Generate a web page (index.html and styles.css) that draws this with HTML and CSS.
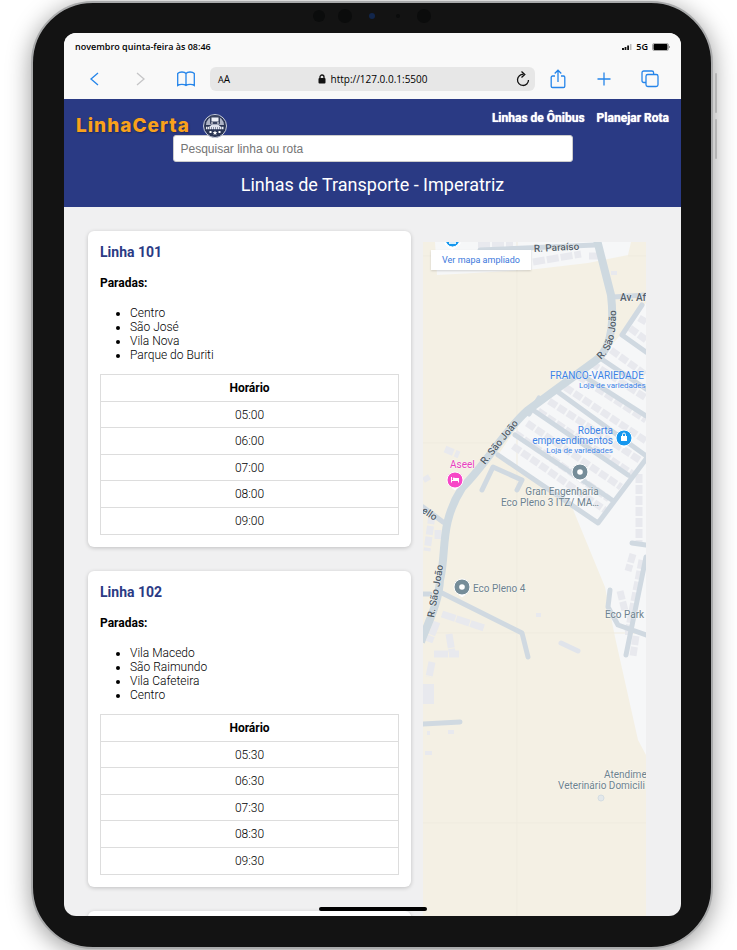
FILE: index.html
```html
<!DOCTYPE html>
<html lang="pt-BR">
<head>
<meta charset="utf-8">
<meta name="viewport" content="width=device-width, initial-scale=1">
<title>LinhaCerta</title>
<link rel="stylesheet" href="styles.css">
</head>
<body>
<div class="device">
  <div class="cameras" aria-hidden="true"><i class="cam"></i><i class="cam big"></i><i class="cam blue"></i><i class="cam tiny"></i><i class="cam big"></i></div>
  <span class="side-key key-up"></span>
  <span class="side-key key-down"></span>
  <div class="screen">
    <div class="status">
      <span>novembro quinta-feira às 08:46</span>
      <span class="status-right">
        <svg width="10" height="8" viewBox="0 0 10 8"><path d="M0 5h2v2H0zM2.600 4h1.800v3H2.600zM5.200 2.500H7V7H5.200z" fill="#111"/><path d="M7.900 1h1.600v6H7.900z" fill="#bbb"/></svg>
        <span>5G</span>
        <svg width="18" height="8" viewBox="0 0 18 8"><rect x=".5" y=".5" width="16" height="7" rx="1.500" fill="#fff" stroke="#aaa"/><rect x="1.500" y="1" width="14" height="6" rx="1" fill="#000"/><path d="M17.300 3v2" stroke="#888"/></svg>
      </span>
    </div>
    <div class="toolbar">
      <div class="tools-left">
        <button type="button" aria-label="Voltar"><svg width="18" height="18" viewBox="0 0 18 18"><path d="M13 3 6 9l7 6"/></svg></button>
        <button type="button" class="off" aria-label="Avançar"><svg width="18" height="18" viewBox="0 0 18 18"><path d="m6 3 7 6-7 6"/></svg></button>
        <button type="button" aria-label="Favoritos"><svg width="18" height="18" viewBox="0 0 18 18"><path d="M9 3.500C7.500 1.500 2.500 1.500.7 3.500v12c2-1.600 6.500-1.600 8.300 0 1.800-1.600 6.300-1.600 8.300 0v-12C15.500 1.500 10.500 1.500 9 3.500zv12"/></svg></button>
      </div>
      <div class="address">
        <span class="aa"><small>A</small>A</span>
        <span class="url"><svg width="8" height="10" viewBox="0 0 8 10"><path d="M2 4.500V3a2 2 0 0 1 4 0v1.500" fill="none" stroke="#111" stroke-width="1.300"/><rect x=".5" y="4" width="7" height="5.500" rx="1" fill="#111"/></svg>http://127.0.0.1:5500</span>
        <button type="button" class="reload" aria-label="Recarregar"><svg width="16" height="18" viewBox="0 0 16 18"><path d="M8.500 4.500A5.500 5.500 0 1 0 13.500 10M6.500 1.500l3.300 3-3.300 3"/></svg></button>
      </div>
      <div class="tools-right">
        <button type="button" aria-label="Compartilhar"><svg width="18" height="20" viewBox="0 0 18 20"><path d="M6 7H3.500A1.300 1.300 0 0 0 2.200 8.300v8.900a1.300 1.300 0 0 0 1.300 1.300h11a1.300 1.300 0 0 0 1.300-1.300V8.300A1.300 1.300 0 0 0 14.500 7H12M9 13V1.500M5.700 4.500 9 1.200l3.300 3.300"/></svg></button>
        <button type="button" aria-label="Nova aba"><svg width="18" height="18" viewBox="0 0 18 18"><path d="M9 2.500v13M2.500 9h13"/></svg></button>
        <button type="button" aria-label="Abas"><svg width="18" height="18" viewBox="0 0 18 18"><rect x="5" y="4.500" width="12" height="12" rx="1.800"/><path d="M5 12.500H2.800A1.800 1.800 0 0 1 1 10.700V2.800A1.800 1.800 0 0 1 2.800 1h8a1.800 1.800 0 0 1 1.800 1.800v1.700"/></svg></button>
      </div>
    </div>

    <header class="site-header">
      <div class="top-row">
        <a class="brand" href="#">
          <span class="brand-name">LinhaCerta</span>
          <svg width="24" height="24" viewBox="0 0 24 24"><circle cx="12" cy="12" r="11.500" fill="#2b3655" stroke="#c9cede"/><path d="M3 11a9 9 0 0 1 18 0z" fill="#aeb4c6"/><rect x="7" y="1.500" width="10" height="9" rx="1.500" fill="#39435f"/><path d="M8.500 3.500h7v4h-7z" fill="#eef0f6"/><path d="M8 9h2M14 9h2" stroke="#fff"/><path d="M9 10.500 6 13h12l-3-2.500z" fill="#dfe2ec"/><path d="M3 14h18" stroke="#e8ebf4" stroke-width="2.400" stroke-dasharray="1.500 .5"/><path d="m12 16.500.7 1.500 1.600.2-1.200 1.100.3 1.600-1.400-.8-1.400.8.300-1.600-1.200-1.100 1.600-.2zM6.500 17h2v2h-2zM15.500 17h2v2h-2z" fill="#fff"/></svg>
        </a>
        <nav class="nav"><a href="#">Linhas de Ônibus</a><a href="#">Planejar Rota</a></nav>
      </div>
      <input class="search" type="search" placeholder="Pesquisar linha ou rota" aria-label="Pesquisar linha ou rota">
      <h1>Linhas de Transporte - Imperatriz</h1>
    </header>

    <main class="content">
      <section class="lines">
        <article class="card">
          <h2>Linha 101</h2>
          <h3>Paradas:</h3>
          <ul><li>Centro</li><li>São José</li><li>Vila Nova</li><li>Parque do Buriti</li></ul>
          <table>
            <thead><tr><th scope="col">Horário</th></tr></thead>
            <tbody><tr><td>05:00</td></tr><tr><td>06:00</td></tr><tr><td>07:00</td></tr><tr><td>08:00</td></tr><tr><td>09:00</td></tr></tbody>
          </table>
        </article>
        <article class="card">
          <h2>Linha 102</h2>
          <h3>Paradas:</h3>
          <ul><li>Vila Macedo</li><li>São Raimundo</li><li>Vila Cafeteira</li><li>Centro</li></ul>
          <table>
            <thead><tr><th scope="col">Horário</th></tr></thead>
            <tbody><tr><td>05:30</td></tr><tr><td>06:30</td></tr><tr><td>07:30</td></tr><tr><td>08:30</td></tr><tr><td>09:30</td></tr></tbody>
          </table>
        </article>
        <article class="card"></article>
      </section>
      <aside class="map-column">
        <div class="map">
          <svg class="map-drawing" viewBox="0 0 223 674" preserveAspectRatio="xMinYMin slice" role="img" aria-label="Mapa">
            <defs>
              <path id="sj1" d="M178 118C190 107 194 92 193 60"/>
              <path id="sj2" d="M62 223 100 176"/>
              <path id="sj3" d="M11 376 22 314"/>
            </defs>
            <rect width="223" height="674" fill="#f4f0e4"/>
            <!-- urban areas -->
            <path d="M12 0h196l-3 13-40 8-60 7-91 5zM223 61 199 91 178 116 135 147 106 168 75 213 149 265 182 345 192 395 215 498 223 513z" fill="#f6f7f8"/>
            <path d="M94 0v674M0 581h223M0 391h223M0 201h80M0 14h12M205 14h18" class="seam"/>
            <!-- buildings -->
            <g class="blocks">
              <path d="M55 3h35M110 20l48-8M166 14h12" stroke-dasharray="12 2"/>
              <path d="M207 86l16 12M216 76l7 4"/>
              <path d="M188 108l35 25M168 121l55 35M155 134l68 44M142 145l81 54M126 159l92 60M115 169l96 64M104 181l94 64M92 191l94 66M90 204l92 64"/>
              <path d="M216 232v72M210 312l-5 17M219 318l-14 72M213 394l-3 20M197 349l5 20" />
              <path d="M22 207l14 6M2 234l3 5M9 273l-5 36M15 288v10"/>
              <path d="M19 372l42 14M14 380l-8 20M26 392l3 18M11 412h25M9 420l-3 15" stroke-dasharray="14 1"/>
              <path d="M5 442v20" stroke-width="12" stroke-dasharray="none"/>
              <path d="M113 373h5M188 31h6M4 491h3M25 490h6M2 511h7M202 391h5" stroke-width="4"/>
            </g>
            <!-- streets -->
            <g class="streets">
              <path d="M57 8 172 3M190 55l33-2M219 63l-20 30 24 17M180 118l43 29M159 133l64 41M135 150l87 63M110 168l95 65M92 193l97 65M75 213l100 68 48-64"/>
              <path d="M106 172l10-16M59 248l11-23 29 13-5 10M0 265l20 15M-1 352h8M19 351l80 40 6 24M187 348l-2 17 10 18 28 10M223 315l-20 98M209 301l14 2M0 482l37-2"/>
              <path d="M138 401l17 8" class="minor"/>
            </g>
            <path d="M174-2 188 53C192 88 186 109 172 119L135 146 105 168C80 190 65 220 39 246 16 282 24 310 17 338 16 360 5 381-2 400" class="avenue"/>
            <!-- street names -->
            <g class="road-label">
              <text transform="translate(111 10) rotate(-3)">R. Paraíso</text>
              <text x="197" y="59">Av. Af</text>
              <text><textPath href="#sj1">R. São João</textPath></text>
              <text><textPath href="#sj2">R. São João</textPath></text>
              <text><textPath href="#sj3">R. São João</textPath></text>
              <text transform="translate(-2 270) rotate(34)">ello</text>
            </g>
            <!-- places -->
            <g class="shop">
              <text x="127" y="137">FRANCO-VARIEDADE</text>
              <text x="156" y="146" class="sub">Loja de variedades</text>
              <text x="190" y="192" text-anchor="end">Roberta</text>
              <text x="190" y="202" text-anchor="end">empreendimentos</text>
              <text x="190" y="211" text-anchor="end" class="sub">Loja de variedades</text>
            </g>
            <text x="27" y="226" class="hotel">Aseel</text>
            <g class="place">
              <text x="139" y="253" text-anchor="middle">Gran Engenharia</text>
              <text x="127" y="264" text-anchor="middle">Eco Pleno 3 ITZ/ MA…</text>
              <text x="50" y="350">Eco Pleno 4</text>
              <text x="182" y="376">Eco Park</text>
              <text x="181" y="536">Atendime</text>
              <text x="135" y="547">Veterinário Domicili</text>
            </g>
            <!-- pins -->
            <g stroke="#fff" stroke-width="1">
              <path d="M22-2a8 8 0 0 0 15 0v4l-8 6-7-6z" fill="#fff"/><circle cx="29.500" cy="-2" r="7" fill="#1597ee"/>
              <path d="m196 202 5 4 5-4z" fill="#fff"/><circle cx="201" cy="196" r="8" fill="#1597ee"/>
              <path d="m27 244 5 4 5-4z" fill="#fff"/><circle cx="32" cy="238" r="8" fill="#f747c7"/>
              <path d="m152 236 5 4 5-4z" fill="#fff"/><circle cx="157" cy="230" r="8" fill="#768d99"/>
              <path d="m34 351 5 4 5-4z" fill="#fff"/><circle cx="39" cy="345" r="8" fill="#768d99"/>
            </g>
            <g fill="#fff"><circle cx="157" cy="230" r="2.800"/><circle cx="39" cy="345" r="2.800"/>
              <path d="M198 194h6v5h-6z"/><path d="M28 235h1v3h1v-2h6v4.500h-1V239h-6v1.500h-1z"/><circle cx="30.800" cy="236.500" r="1"/></g>
            <path d="M199.500 194v-1.500a1.500 1.500 0 0 1 3 0v1.500" fill="none" stroke="#fff"/>
            <path d="M26-1h7v3h-7z" fill="#d9effc"/>
            <circle cx="178" cy="556" r="3" fill="#e3e8ea" stroke="#d4dde2"/>
          </svg>
          <a class="map-link" href="#">Ver mapa ampliado</a>
        </div>
      </aside>
    </main>
    <span class="home-bar"></span>
  </div>
</div>
</body>
</html>
```
FILE: styles.css
```css
* { box-sizing: border-box; }

body {
  margin: 0;
  overflow: hidden;
  background: #fff;
  color: #000;
  font: 12px/14px Roboto, "Liberation Sans", sans-serif;
}

a { color: inherit; text-decoration: none; }

button {
  display: flex;
  padding: 0;
  border: 0;
  background: none;
  color: #2585ea;
}

button svg {
  fill: none;
  stroke: currentColor;
  stroke-width: 1.3;
}

/* Tablet frame */
.device {
  position: relative;
  height: calc(100vh - 2px);
  margin: 1px 24px 1px 31px;
  padding: 30px 30px 31px 31px;
  border: 2px solid #a9aaab;
  border-radius: 62px;
  background: #131313;
  box-shadow: 0 4px 24px rgba(0, 0, 0, .4);
}

.cameras {
  position: absolute;
  top: 6px;
  left: 0;
  right: 0;
  display: flex;
  justify-content: center;
  align-items: center;
  gap: 13px;
  height: 14px;
}

.cam { width: 12px; height: 12px; border-radius: 50%; background: #0b0c0c; }
.cam.big { width: 14px; height: 14px; }
.cam.blue { width: 6px; height: 6px; margin: 0 4px; background: #12264b; }
.cam.tiny { width: 4px; height: 4px; margin: 0 4px; }

.side-key {
  position: absolute;
  right: -6px;
  width: 2px;
  height: 40px;
  border-radius: 1px;
  background: #b5b5b5;
}

.key-up { top: 70px; }
.key-down { top: 116px; }

.screen {
  position: relative;
  display: flex;
  flex-direction: column;
  height: 100%;
  overflow: hidden;
  border-radius: 12px;
  background: #f0f0f1;
}

/* Browser chrome */
.status {
  display: flex;
  justify-content: space-between;
  align-items: center;
  height: 28px;
  padding: 0 11px;
  background: #f9f9f9;
  font: 600 9px/14px "Open Sans", "Noto Sans", sans-serif;
}

.status-right { display: flex; align-items: center; gap: 4px; }

.toolbar {
  display: grid;
  grid-template-columns: 146px 1fr 146px;
  align-items: center;
  height: 38px;
  padding-bottom: 2px;
  background: #f9f9f9;
}

.tools-left, .tools-right { display: flex; align-items: center; gap: 28px; }
.tools-left { padding-left: 21px; }
.tools-right { justify-content: flex-end; padding-right: 22px; }
.off { color: #c5c5c7; }

.address {
  display: flex;
  justify-content: space-between;
  align-items: center;
  height: 24px;
  padding: 0 4px 0 8px;
  border-radius: 6px;
  background: #e7e7e7;
  font: 10px/16px "Open Sans", "Noto Sans", sans-serif;
}

.aa small { font-size: 9px; }
.url { display: flex; align-items: center; gap: 5px; }
.reload { color: #111; }

/* Page header */
.site-header {
  padding: 12px;
  background: #2a3a84;
  color: #fff;
  text-align: center;
}

.top-row { display: flex; justify-content: space-between; align-items: flex-start; height: 24px; }
.brand { display: flex; align-items: center; gap: 13px; padding-top: 3px; }

.brand-name {
  color: #f9a11b;
  font: 800 19px/24px Inter, sans-serif;
  letter-spacing: 1px;
  text-shadow: 1px 1px 2px rgba(0, 0, 0, .3);
}

.nav { display: flex; gap: 12px; font-weight: 700; text-shadow: 0 0 1px #fff; }

.search {
  display: block;
  width: 400px;
  max-width: 100%;
  height: 27px;
  margin: 0 auto 12px;
  padding: 0 7px;
  border: 1px solid #ccc;
  border-radius: 3px;
  background: #fff;
  font: 12px/14px "Liberation Sans", Arial, sans-serif;
}

.search::placeholder { color: #757575; }

h1 { margin: 0; font-size: 18px; line-height: 21px; font-weight: 400; }

/* Lines and map */
.content {
  display: grid;
  grid-template-columns: 29fr 21fr;
  grid-template-rows: 100%;
  column-gap: 12px;
  flex: 1;
  min-height: 0;
  padding: 24px 24px 0;
  overflow: hidden;
}

.lines { display: flex; flex-direction: column; gap: 24px; }

.card {
  flex: none;
  padding: 12px;
  border-radius: 6px;
  background: #fff;
  box-shadow: 0 1px 4px rgba(0, 0, 0, .2);
}

h2 { margin: 0 0 15px; color: #2a3a84; font-size: 14px; line-height: 18px; font-weight: 700; }
h3 { margin: 0 0 16px; font-size: 12px; line-height: 14px; font-weight: 700; }
ul { margin: 0 0 12px; padding-left: 30px; font-weight: 300; }

table { width: 100%; border-collapse: collapse; text-align: center; font-weight: 300; }
th, td { padding: 6px; border: 1px solid #ddd; }
td { padding-bottom: 5px; }
th { font-weight: 700; }
tr:nth-child(even) td, tr:last-child td { padding-bottom: 6px; }

.map-column { padding: 11px 11px 0 0; min-width: 0; }
.map { position: relative; height: 100%; overflow: hidden; }
.map-drawing { display: block; width: 100%; height: 100%; }

.map-link {
  position: absolute;
  top: 8px;
  left: 8px;
  padding: 3px 11px;
  background: #fff;
  box-shadow: 0 1px 2px rgba(0, 0, 0, .15);
  color: #3b78dc;
  font-size: 9px;
}

.seam { fill: none; stroke: #efebdf; }
.blocks { fill: none; stroke: #e8e9ee; stroke-width: 7; stroke-dasharray: 9 2; }
.streets { fill: none; stroke: #d0d9e1; stroke-width: 5; stroke-linecap: round; stroke-linejoin: round; }
.streets .minor { stroke: #e0e4eb; }
.avenue { fill: none; stroke: #ced9e0; stroke-width: 8; }

.map-drawing text { font-size: 10px; stroke: #fff; stroke-width: 1px; stroke-opacity: .5; paint-order: stroke; }
.map-drawing .road-label text { fill: #545f69; font-weight: 500; }
.shop { fill: #3b82e6; }
.map-drawing .sub { font-size: 8px; }
.hotel { fill: #e83fc0; }
.place { fill: #6d828e; }

.home-bar {
  position: absolute;
  bottom: 5px;
  left: 50%;
  width: 108px;
  height: 4px;
  margin-left: -54px;
  border-radius: 2px;
  background: #000;
}
```
